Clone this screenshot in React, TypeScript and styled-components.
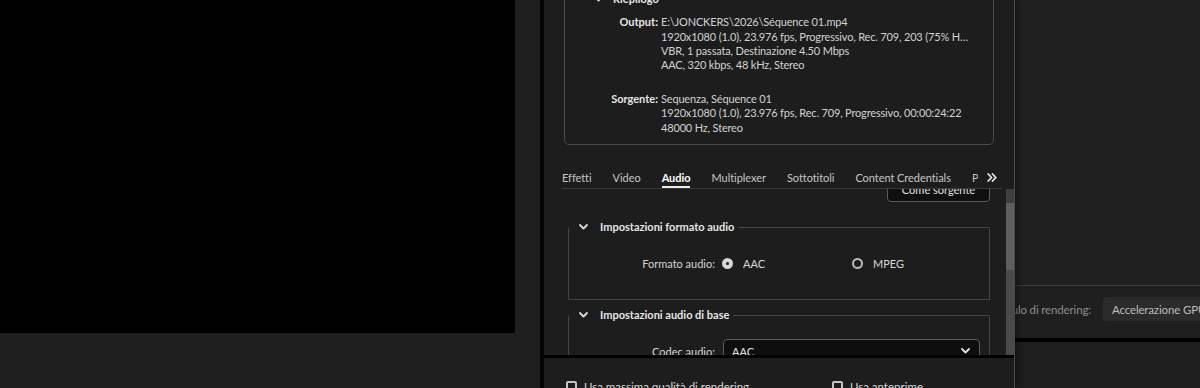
import React from 'react';
import styled, {createGlobalStyle} from 'styled-components';

const GlobalStyle = createGlobalStyle`
  html, body {
    margin: 0;
    padding: 0;
    background: #202020;
  }
  body {
    font-family: Lato, "Open Sans", "Liberation Sans", sans-serif;
    font-size: 11px;
    color: #cfcfcf;
  }
  * {
    box-sizing: border-box;
  }
`

const Chevron = ({color = '#dcdcdc'}: { color?: string }) => (
    <svg width="9" height="6" viewBox="0 0 9 6">
        <path d="M1 1l3.5 3.5L8 1" stroke={color} strokeWidth="1.8" fill="none"
              strokeLinecap="round" strokeLinejoin="round"/>
    </svg>
)

const DoubleChevron = () => (
    <svg width="10" height="9" viewBox="0 0 10 9">
        <path d="M1.2 1l3.3 3.5L1.2 8M5.5 1l3.3 3.5L5.5 8" stroke="#e6e6e6" strokeWidth="1.8" fill="none"
              strokeLinecap="round" strokeLinejoin="round"/>
    </svg>
)

const tabs = ['Effetti', 'Video', 'Audio', 'Multiplexer', 'Sottotitoli', 'Content Credentials', 'Pubblica']

export default function App() {
    return (
        <>
            <GlobalStyle/>
            <Screen>
                <PreviewColumn>
                    <Monitor/>
                </PreviewColumn>

                <Dialog>
                    <UpperPane>
                        <SummaryArea>
                            <SummaryBox>
                                <SummaryHeader>
                                    <Chevron/>
                                    <span>Riepilogo</span>
                                </SummaryHeader>
                                <InfoGrid>
                                    <InfoLabel>Output:</InfoLabel>
                                    <InfoValues>
                                        <InfoLine>E:\JONCKERS\2026\Séquence 01.mp4</InfoLine>
                                        <InfoLine>1920x1080 (1.0), 23.976 fps, Progressivo, Rec. 709, 203 (75% HLG, 58% PQ)</InfoLine>
                                        <InfoLine>VBR, 1 passata, Destinazione 4.50 Mbps</InfoLine>
                                        <InfoLine>AAC, 320 kbps, 48 kHz, Stereo</InfoLine>
                                    </InfoValues>
                                    <InfoLabel>Sorgente:</InfoLabel>
                                    <InfoValues>
                                        <InfoLine>Sequenza, Séquence 01</InfoLine>
                                        <InfoLine>1920x1080 (1.0), 23.976 fps, Rec. 709, Progressivo, 00:00:24:22</InfoLine>
                                        <InfoLine>48000 Hz, Stereo</InfoLine>
                                    </InfoValues>
                                </InfoGrid>
                            </SummaryBox>
                        </SummaryArea>

                        <TabBar>
                            <TabList>
                                {tabs.map(t => (
                                    <Tab key={t} $active={t === 'Audio'}>{t}</Tab>
                                ))}
                            </TabList>
                            <OverflowButton>
                                <DoubleChevron/>
                            </OverflowButton>
                        </TabBar>

                        <ScrollArea>
                            <ScrollViewport>
                                <ScrollContent>
                                    <ButtonRow>
                                        <GhostButton>Come sorgente</GhostButton>
                                    </ButtonRow>

                                    <Section>
                                        <SectionLegend>
                                            <Chevron/>
                                            <span>Impostazioni formato audio</span>
                                        </SectionLegend>
                                        <FormRow>
                                            <FieldLabel>Formato audio:</FieldLabel>
                                            <RadioGroup>
                                                <RadioOption>
                                                    <RadioDot $checked/>
                                                    <span>AAC</span>
                                                </RadioOption>
                                                <RadioOption>
                                                    <RadioDot/>
                                                    <span>MPEG</span>
                                                </RadioOption>
                                            </RadioGroup>
                                        </FormRow>
                                    </Section>

                                    <Section $tight>
                                        <SectionLegend>
                                            <Chevron/>
                                            <span>Impostazioni audio di base</span>
                                        </SectionLegend>
                                        <FormRow>
                                            <FieldLabel>Codec audio:</FieldLabel>
                                            <Select>
                                                <span>AAC</span>
                                                <Chevron color="#e0e0e0"/>
                                            </Select>
                                        </FormRow>
                                    </Section>
                                </ScrollContent>
                            </ScrollViewport>
                            <Scrollbar>
                                <ScrollCap/>
                                <ScrollThumb/>
                            </Scrollbar>
                        </ScrollArea>
                    </UpperPane>

                    <PaneDivider/>

                    <BottomBar>
                        <CheckItem $width={266}>
                            <CheckBox/>
                            <span>Usa massima qualità di rendering</span>
                        </CheckItem>
                        <CheckItem>
                            <CheckBox/>
                            <span>Usa anteprime</span>
                        </CheckItem>
                    </BottomBar>
                </Dialog>

                <SideColumn>
                    <SideTop/>
                    <RenderRow>
                        <ClippedLabel>
                            <span>Modulo di rendering:</span>
                        </ClippedLabel>
                        <GpuBox>Accelerazione GPU (CUDA)</GpuBox>
                    </RenderRow>
                    <BlackRule/>
                    <SideBottom/>
                </SideColumn>
            </Screen>
        </>
    )
}

const Screen = styled.div`
  display: flex;
  width: 1200px;
  height: 388px;
  overflow: hidden;
  background: #202020;
`

const PreviewColumn = styled.div`
  width: 540px;
  flex: none;
  background: #1f1f1f;
`

const Monitor = styled.div`
  width: 515px;
  height: 333px;
  background: #000;
`

const Dialog = styled.div`
  position: relative;
  z-index: 1;
  width: 475px;
  flex: none;
  display: flex;
  flex-direction: column;
  background: #1d1d1d;
  border-left: 4px solid #050505;
  border-right: 1px solid #4a4a4a;
  box-shadow: 3px 0 6px rgba(0, 0, 0, 0.35);
`

const UpperPane = styled.div`
  height: 355px;
  flex: none;
  display: flex;
  flex-direction: column;
`

const SummaryArea = styled.div`
  height: 160px;
  flex: none;
  display: flex;
  flex-direction: column;
  justify-content: flex-end;
  overflow: hidden;
  padding: 0 20px 15px 20px;
`

const SummaryBox = styled.div`
  border: 1px solid #4b4b4b;
  border-radius: 5px;
  padding: 0 0 9px 0;
`

const SummaryHeader = styled.div`
  display: flex;
  align-items: center;
  gap: 10px;
  padding-left: 29px;
  line-height: 16px;
  margin-bottom: 8px;
  font-weight: 700;
  color: #e6e6e6;
`

const InfoGrid = styled.div`
  display: grid;
  grid-template-columns: 93px minmax(0, 1fr);
  column-gap: 3px;
  row-gap: 19px;
  padding-right: 24px;
  line-height: 14.4px;
`

const InfoLabel = styled.div`
  text-align: right;
  font-weight: 700;
  color: #e6e6e6;
`

const InfoValues = styled.div`
  display: flex;
  flex-direction: column;
  min-width: 0;
`

const InfoLine = styled.div`
  white-space: nowrap;
  overflow: hidden;
  text-overflow: ellipsis;
  letter-spacing: -0.17px;
  color: #d2d2d2;
`

const TabBar = styled.div`
  height: 29px;
  flex: none;
  display: flex;
  align-items: flex-end;
  margin: 0 12px 0 18px;
  border-bottom: 1px solid #3a3a3a;
`

const TabList = styled.div`
  flex: 1;
  min-width: 0;
  display: flex;
  gap: 21px;
  overflow: hidden;
`

const Tab = styled.div<{ $active?: boolean }>`
  padding: 11px 0 3px;
  line-height: 14px;
  white-space: nowrap;
  letter-spacing: -0.05px;
  color: ${p => p.$active ? '#ffffff' : '#c6c6c6'};
  font-weight: ${p => p.$active ? 700 : 400};
  box-shadow: ${p => p.$active ? 'inset 0 -2px 0 #ededed' : 'none'};
`

const OverflowButton = styled.div`
  width: 24px;
  height: 28px;
  flex: none;
  display: flex;
  align-items: center;
  justify-content: flex-end;
  padding: 7px 5px 0 0;
`

const ScrollArea = styled.div`
  flex: 1;
  min-height: 0;
  display: flex;
  overflow: hidden;
`

const ScrollViewport = styled.div`
  flex: 1;
  overflow: hidden;
  padding: 0 16px 0 24px;
`

const ScrollContent = styled.div`
  margin-top: -13px;
`

const ButtonRow = styled.div`
  display: flex;
  justify-content: flex-end;
`

const GhostButton = styled.div`
  width: 103px;
  height: 26px;
  display: flex;
  align-items: center;
  justify-content: center;
  border: 1px solid #5c5c5c;
  border-radius: 4px;
  background: #0f0f0f;
  color: #e2e2e2;
`

const Section = styled.fieldset<{ $tight?: boolean }>`
  margin: ${p => p.$tight ? '7px' : '17px'} 0 0;
  padding: 17px 0 25px;
  border: 1px solid #454545;
  border-radius: 1px;
  min-width: 0;
`

const SectionLegend = styled.legend`
  display: flex;
  align-items: center;
  gap: 12px;
  padding: 0 4px 0 10px;
  line-height: 16px;
  font-weight: 700;
  color: #e4e4e4;
`

const FormRow = styled.div`
  display: flex;
  align-items: center;
  height: 22px;
`

const FieldLabel = styled.div`
  width: 147px;
  flex: none;
  text-align: right;
  padding-right: 1px;
  color: #d4d4d4;
`

const RadioGroup = styled.div`
  display: flex;
  margin-left: 6px;
`

const RadioOption = styled.div`
  width: 130px;
  display: flex;
  align-items: center;
  gap: 10px;
  color: #d8d8d8;
`

const RadioDot = styled.div<{ $checked?: boolean }>`
  width: 11px;
  height: 11px;
  border-radius: 50%;
  border: ${p => p.$checked ? '4px solid #d6d6d6' : '2px solid #bdbdbd'};
  background: #1d1d1d;
`

const Select = styled.div`
  width: 257px;
  height: 24px;
  margin-left: 7px;
  display: flex;
  align-items: center;
  justify-content: space-between;
  padding: 0 9px 0 8px;
  border: 1px solid #5c5c5c;
  border-radius: 4px;
  background: #0e0e0e;
  color: #e2e2e2;
`

const Scrollbar = styled.div`
  width: 8px;
  flex: none;
  display: flex;
  flex-direction: column;
  background: #4a4a4a;
`

const ScrollCap = styled.div`
  height: 14px;
  background: #3e3e3e;
`

const ScrollThumb = styled.div`
  height: 67px;
  background: #5e5e5e;
`

const PaneDivider = styled.div`
  height: 3px;
  flex: none;
  background: #000;
`

const BottomBar = styled.div`
  flex: 1;
  display: flex;
  padding: 21px 0 0 22px;
`

const CheckItem = styled.div<{ $width?: number }>`
  width: ${p => p.$width ? `${p.$width}px` : 'auto'};
  display: flex;
  align-items: center;
  gap: 7px;
  height: 14px;
  font-size: 11.5px;
  color: #d8d8d8;
`

const CheckBox = styled.div`
  width: 11px;
  height: 11px;
  flex: none;
  border: 2px solid #c4c4c4;
  border-radius: 2px;
`

const SideColumn = styled.div`
  flex: 1;
  min-width: 0;
  display: flex;
  flex-direction: column;
`

const SideTop = styled.div`
  height: 286px;
  flex: none;
  background: #202020;
  border-bottom: 1px solid #3c3c3c;
`

const RenderRow = styled.div`
  height: 52px;
  flex: none;
  display: flex;
  align-items: flex-start;
  padding-top: 11px;
  background: #1f1f1f;
  font-size: 11.5px;
  letter-spacing: -0.15px;
`

const ClippedLabel = styled.div`
  width: 88px;
  height: 24px;
  flex: none;
  display: flex;
  align-items: center;
  justify-content: flex-end;
  padding-right: 12px;
  overflow: hidden;
  white-space: nowrap;
  color: #8e8e8e;
`

const GpuBox = styled.div`
  height: 24px;
  flex: none;
  display: flex;
  align-items: center;
  padding: 0 9px;
  border-radius: 4px;
  background: #2b2b2b;
  color: #bdbdbd;
  white-space: nowrap;
`

const BlackRule = styled.div`
  height: 4px;
  flex: none;
  background: #000;
`

const SideBottom = styled.div`
  flex: 1;
  background: #1e1e1e;
`
